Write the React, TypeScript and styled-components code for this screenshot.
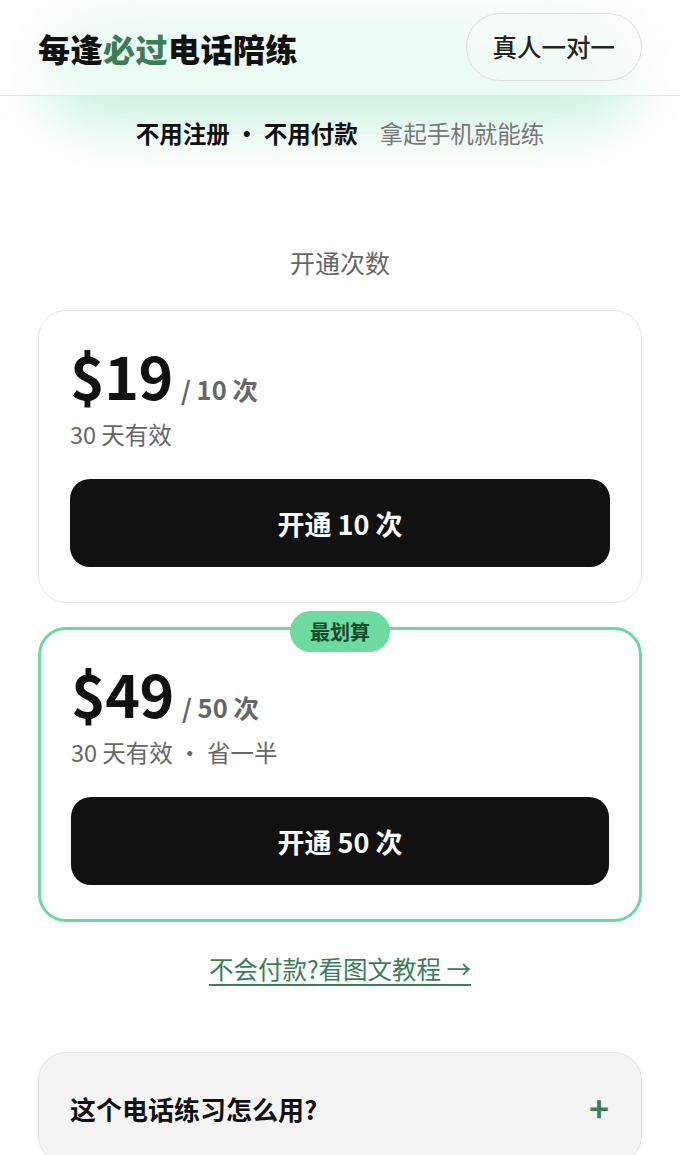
import React from "react";
import styled, { createGlobalStyle } from "styled-components";

const GlobalStyle = createGlobalStyle`
  html, body {
    margin: 0;
    padding: 0;
    background: #ffffff;
  }
  body {
    font-family: "Noto Sans CJK SC", "Noto Sans", sans-serif;
    color: #111;
  }
  * {
    box-sizing: border-box;
  }
`;

const Page = styled.div`
  position: relative;
  min-height: 1155px;
  overflow: hidden;
`;

// soft green glow that sits behind the header
const Glow = styled.div`
  position: absolute;
  left: 40px;
  right: 40px;
  top: 10px;
  height: 115px;
  border-radius: 60px;
  background: #b9efd3;
  opacity: 0.75;
  filter: blur(28px);
  pointer-events: none;
`;

const Header = styled.header`
  position: relative;
  height: 96px;
  padding: 0 38px;
  display: flex;
  align-items: center;
  justify-content: space-between;
  background: rgba(255, 255, 255, 0.62);
  border-bottom: 1px solid #e6e6e6;
`;

const Brand = styled.h1`
  margin: 0;
  font-size: 32px;
  font-weight: 900;
  letter-spacing: 0.5px;
  color: #111;
`;

const Accent = styled.span`
  color: #3b7d56;
`;

const PillButton = styled.button`
  height: 68px;
  padding: 0 26px;
  border-radius: 999px;
  border: 1.5px solid #dedede;
  background: rgba(255, 255, 255, 0.3);
  font-family: inherit;
  font-size: 24.5px;
  font-weight: 500;
  color: #222;
  margin-top: -2px;
`;

const Main = styled.main`
  position: relative;
  padding: 0 38px;
`;

const Tagline = styled.p`
  margin: 20px 0 0;
  text-align: center;
  font-size: 23.5px;
  line-height: 34px;
`;

const Strong = styled.span`
  font-weight: 700;
  color: #111;
`;

const Muted = styled.span`
  margin-left: 22px;
  color: #777;
`;

const SectionTitle = styled.h2`
  margin: 95px 0 0;
  text-align: center;
  font-size: 25px;
  line-height: 34px;
  font-weight: 400;
  color: #666;
`;

const Plans = styled.div`
  margin-top: 31px;
  display: flex;
  flex-direction: column;
  gap: 24px;
`;

const PlanCard = styled.section<{ $featured?: boolean }>`
  position: relative;
  border-radius: 28px;
  border: ${(p) => (p.$featured ? "3px solid #6fd8a1" : "1.5px solid #e6e6e6")};
  background: #fff;
  padding: ${(p) => (p.$featured ? "33px 30px 34px" : "34px 31px 35px")};
`;

const Badge = styled.div`
  position: absolute;
  top: -19px;
  left: 50%;
  transform: translateX(-50%);
  height: 41px;
  padding: 0 20px;
  border-radius: 999px;
  background: #6ddb9f;
  color: #174a2c;
  font-size: 20px;
  font-weight: 700;
  display: flex;
  align-items: center;
`;

const PriceRow = styled.div`
  display: flex;
  align-items: baseline;
  gap: 8px;
`;

const Price = styled.span`
  font-size: 59px;
  line-height: 1;
  font-weight: 700;
  color: #111;
  letter-spacing: -0.5px;
`;

const Per = styled.span`
  font-size: 25.5px;
  font-weight: 700;
  color: #666;
`;

const Validity = styled.p`
  margin: 11px 0 0;
  font-size: 23.5px;
  line-height: 32px;
  color: #666;
`;

const BuyButton = styled.button`
  margin-top: 29px;
  width: 100%;
  height: 88px;
  border: none;
  border-radius: 20px;
  background: #111;
  color: #fff;
  font-family: inherit;
  font-size: 27px;
  font-weight: 700;
`;

const HelpLink = styled.a`
  display: block;
  margin: 30px auto 0;
  width: fit-content;
  font-size: 24.5px;
  line-height: 34px;
  color: #3b7d56;
  text-decoration: underline;
  text-underline-offset: 5px;
  text-decoration-thickness: 1.5px;
`;

const FaqItem = styled.div`
  margin-top: 66px;
  height: 112px;
  padding: 0 32px 0 31px;
  border: 1.5px solid #e2e2e2;
  border-radius: 28px;
  background: #f4f4f4;
  display: flex;
  align-items: center;
  justify-content: space-between;
`;

const FaqQuestion = styled.span`
  font-size: 26px;
  font-weight: 700;
  color: #111;
`;

const Plus = styled.span`
  font-size: 34px;
  font-weight: 700;
  color: #3b7d56;
  line-height: 1;
`;

const plans = [
  { price: "$19", count: 10, note: "30 天有效", featured: false },
  { price: "$49", count: 50, note: "30 天有效 · 省一半", featured: true },
];

const App: React.FC = () => {
  return (
    <Page>
      <GlobalStyle />
      <Glow />
      <Header>
        <Brand>
          每逢<Accent>必过</Accent>电话陪练
        </Brand>
        <PillButton>真人一对一</PillButton>
      </Header>
      <Main>
        <Tagline>
          <Strong>不用注册 · 不用付款</Strong>
          <Muted>拿起手机就能练</Muted>
        </Tagline>

        <SectionTitle>开通次数</SectionTitle>

        <Plans>
          {plans.map((plan) => (
            <PlanCard key={plan.count} $featured={plan.featured}>
              {plan.featured && <Badge>最划算</Badge>}
              <PriceRow>
                <Price>{plan.price}</Price>
                <Per>/ {plan.count} 次</Per>
              </PriceRow>
              <Validity>{plan.note}</Validity>
              <BuyButton>开通 {plan.count} 次</BuyButton>
            </PlanCard>
          ))}
        </Plans>

        <HelpLink href="#">不会付款?看图文教程 →</HelpLink>

        <FaqItem>
          <FaqQuestion>这个电话练习怎么用?</FaqQuestion>
          <Plus>+</Plus>
        </FaqItem>
      </Main>
    </Page>
  );
};

export default App;
